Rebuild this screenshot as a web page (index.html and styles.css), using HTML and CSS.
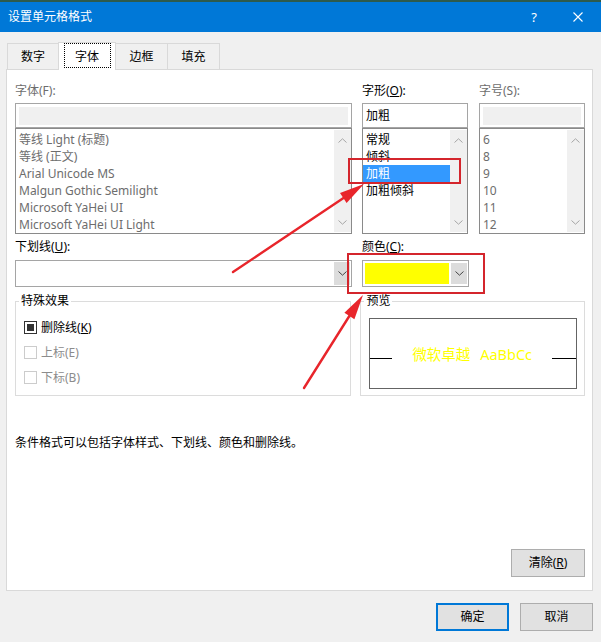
FILE: index.html
```html
<!DOCTYPE html>
<html lang="zh-CN">
<head>
  <meta charset="UTF-8">
  <meta name="viewport" content="width=device-width, initial-scale=1.0">
  <title>设置单元格格式</title>
  <link rel="stylesheet" href="styles.css">
</head>
<body>
  <div class="titlebar">
    <span class="title">设置单元格格式</span>
    <span class="help">?</span>
    <span class="close">
      <svg width="10" height="10" viewBox="0 0 10 10"><path d="M0.5 0.5 L9.5 9.5 M9.5 0.5 L0.5 9.5" stroke="#fff" stroke-width="1.1" fill="none"/></svg>
    </span>
  </div>

  <div class="tabs">
    <div class="tab first">数字</div>
    <div class="tab active"><span class="focus">字体</span></div>
    <div class="tab">边框</div>
    <div class="tab">填充</div>
  </div>

  <div class="panel">
    <div class="row">
      <div class="col col-font">
        <div class="label off">字体(F):</div>
        <div class="input"><div class="fill"></div></div>
        <div class="listbox">
          <ul class="items off">
            <li>等线 Light (标题)</li>
            <li>等线 (正文)</li>
            <li>Arial Unicode MS</li>
            <li>Malgun Gothic Semilight</li>
            <li>Microsoft YaHei UI</li>
            <li>Microsoft YaHei UI Light</li>
          </ul>
          <div class="scroll">
            <svg width="9" height="5" viewBox="0 0 9 5"><path d="M0.5 4.5 L4.5 0.8 L8.5 4.5" stroke="#a6a6a6" fill="none"/></svg>
            <svg width="9" height="5" viewBox="0 0 9 5"><path d="M0.5 0.5 L4.5 4.2 L8.5 0.5" stroke="#a6a6a6" fill="none"/></svg>
          </div>
        </div>
      </div>

      <div class="col col-style">
        <div class="label">字形(<u>O</u>):</div>
        <div class="input"><span class="value">加粗</span></div>
        <div class="listbox">
          <ul class="items">
            <li>常规</li>
            <li>倾斜</li>
            <li class="selected">加粗</li>
            <li>加粗倾斜</li>
          </ul>
          <div class="scroll">
            <svg width="9" height="5" viewBox="0 0 9 5"><path d="M0.5 4.5 L4.5 0.8 L8.5 4.5" stroke="#a6a6a6" fill="none"/></svg>
            <svg width="9" height="5" viewBox="0 0 9 5"><path d="M0.5 0.5 L4.5 4.2 L8.5 0.5" stroke="#a6a6a6" fill="none"/></svg>
          </div>
        </div>
      </div>

      <div class="col col-size">
        <div class="label off">字号(S):</div>
        <div class="input"><div class="fill"></div></div>
        <div class="listbox">
          <ul class="items off">
            <li>6</li>
            <li>8</li>
            <li>9</li>
            <li>10</li>
            <li>11</li>
            <li>12</li>
          </ul>
          <div class="scroll">
            <svg width="9" height="5" viewBox="0 0 9 5"><path d="M0.5 4.5 L4.5 0.8 L8.5 4.5" stroke="#a6a6a6" fill="none"/></svg>
            <svg width="9" height="5" viewBox="0 0 9 5"><path d="M0.5 0.5 L4.5 4.2 L8.5 0.5" stroke="#a6a6a6" fill="none"/></svg>
          </div>
        </div>
      </div>
    </div>

    <div class="row row-combo">
      <div class="col col-font">
        <div class="label label-combo">下划线(<u>U</u>):</div>
        <div class="combo">
          <div class="combo-value"></div>
          <div class="combo-btn">
            <svg width="9" height="5" viewBox="0 0 9 5"><path d="M0.5 0.5 L4.5 4.2 L8.5 0.5" stroke="#444" fill="none"/></svg>
          </div>
        </div>
      </div>
      <div class="col col-style">
        <div class="label label-combo">颜色(<u>C</u>):</div>
        <div class="combo combo-color">
          <div class="swatch"></div>
          <div class="combo-btn">
            <svg width="9" height="5" viewBox="0 0 9 5"><path d="M0.5 0.5 L4.5 4.2 L8.5 0.5" stroke="#444" fill="none"/></svg>
          </div>
        </div>
      </div>
    </div>

    <div class="groups">
      <fieldset class="group group-effects">
        <legend>特殊效果</legend>
        <div class="effects">
          <div class="check-row"><span class="check on"></span>删除线(<u>K</u>)</div>
          <div class="check-row off"><span class="check"></span>上标(E)</div>
          <div class="check-row off"><span class="check"></span>下标(B)</div>
        </div>
      </fieldset>
      <fieldset class="group group-preview">
        <legend>预览</legend>
        <div class="pv-box">
          <span class="pv-line"></span>
          <span class="pv-text">微软卓越 AaBbCc</span>
          <span class="pv-line pv-line-right"></span>
        </div>
      </fieldset>
    </div>

    <p class="note">条件格式可以包括字体样式、下划线、颜色和删除线。</p>

    <div class="panel-foot">
      <button type="button" class="btn btn-clear">清除(<u>R</u>)</button>
    </div>
  </div>

  <div class="footer">
    <button type="button" class="btn btn-ok">确定</button>
    <button type="button" class="btn">取消</button>
  </div>

  <!-- red annotations drawn over the dialog -->
  <svg class="marks" width="601" height="642" viewBox="0 0 601 642">
    <rect x="349" y="159" width="111" height="24" fill="none" stroke="#d4252c" stroke-width="2"/>
    <rect x="348" y="254" width="136" height="39" fill="none" stroke="#d4252c" stroke-width="2"/>
    <line x1="233" y1="272" x2="345" y2="197" stroke="#e8252b" stroke-width="2.4" stroke-linecap="round"/>
    <polygon points="364,184 346.6,202.9 340,192.9" fill="#e8252b"/>
    <line x1="304" y1="388" x2="350" y2="315" stroke="#e8252b" stroke-width="2.4" stroke-linecap="round"/>
    <polygon points="363,295 354.4,319.3 344.4,312.7" fill="#e8252b"/>
  </svg>
</body>
</html>
```

FILE: styles.css
```css
* {
  box-sizing: border-box;
}

body {
  margin: 0;
  width: 601px;
  height: 642px;
  overflow: hidden;
  position: relative;
  background: #f0f0f0;
  font-family: "Noto Sans", "Noto Sans CJK SC", sans-serif;
  font-size: 12px;
  color: #000;
}

/* title bar */
.titlebar {
  height: 32px;
  border-top: 2px solid #2d5a4b;
  background: #0078d7;
  color: #fff;
  display: flex;
  align-items: center;
  padding-left: 8px;
}

.title {
  flex: 1;
  line-height: 16px;
}

.help {
  font-size: 13px;
  margin-right: 36px;
}

.close {
  display: flex;
  margin-right: 18px;
}

/* tabs */
.tabs {
  display: flex;
  align-items: flex-end;
  height: 27px;
  margin-top: 10px;
  padding-left: 7px;
  position: relative;
  z-index: 1;
}

.tab {
  width: 53px;
  height: 26px;
  margin-right: -1px;
  border: 1px solid #d9d9d9;
  border-bottom: none;
  display: flex;
  align-items: center;
  justify-content: center;
  padding-top: 1px;
  line-height: 16px;
}

.tab.first {
  width: 52px;
}

.tab.active {
  width: 58px;
  height: 28px;
  margin-bottom: -1px;
  background: #fff;
  align-items: flex-start;
  padding-top: 0;
}

.focus {
  width: 47px;
  height: 25px;
  border: 1px dotted #000;
  display: flex;
  align-items: center;
  justify-content: center;
  padding-top: 2px;
}

/* main panel */
.panel {
  margin-left: 6px;
  width: 587px;
  height: 522px;
  background: #fff;
  border: 1px solid #d9d9d9;
  padding: 13px 7px 13px 8px;
  display: flex;
  flex-direction: column;
}

.row {
  display: flex;
}

.col-font {
  width: 337px;
  margin-right: 10px;
}

.col-style {
  width: 106px;
  margin-right: 11px;
}

.col-size {
  width: 106px;
}

.label {
  height: 16px;
  line-height: 16px;
  margin-bottom: 4px;
}

.off {
  color: #6d6d6d;
}

.input {
  height: 25px;
  border: 1px solid #a5a5a5;
  padding: 3px 3px 2px;
  display: flex;
  align-items: center;
}

.input .fill {
  width: 100%;
  height: 100%;
  background: #f0f0f0;
}

.input .value {
  line-height: 16px;
}

.listbox {
  height: 106px;
  border: 1px solid #8a8a8a;
  display: flex;
}

.items {
  flex: 1;
  margin: 0;
  padding: 2px 0 0;
  list-style: none;
  overflow: hidden;
}

.items li {
  height: 17px;
  line-height: 17px;
  padding-left: 3px;
  white-space: nowrap;
}

.items li.selected {
  background: #3399ff;
  color: #fff;
}

.scroll {
  width: 17px;
  margin: 1px 0;
  background: #f0f0f0;
  display: flex;
  flex-direction: column;
  justify-content: space-between;
  align-items: center;
  padding: 8px 0 7px;
}

/* underline / colour */
.row-combo {
  margin-top: 5px;
}

.label-combo {
  margin-bottom: 5px;
}

.combo {
  height: 27px;
  border: 1px solid #a5a5a5;
  display: flex;
  padding: 1px;
}

.combo-value {
  flex: 1;
}

.combo-btn {
  width: 16px;
  background: #dcdcdc;
  display: flex;
  align-items: center;
  justify-content: center;
}

.combo-color {
  width: 107px;
  padding: 2px 1px 2px 2px;
}

.swatch {
  flex: 1;
  background: #ffff00;
  margin-right: 2px;
}

/* groups */
.groups {
  display: flex;
  margin-top: 6px;
}

.group {
  margin: 0;
  padding: 0;
  min-width: 0;
  height: 103px;
  border: 1px solid #dcdcdc;
}

.group legend {
  margin-left: 3px;
  padding: 0 2px;
  line-height: 16px;
}

.group-effects {
  width: 337px;
  margin-right: 9px;
}

.group-preview {
  width: 225px;
}

.effects {
  padding: 6px 0 0 8px;
}

.check-row {
  height: 25px;
  display: flex;
  align-items: center;
  line-height: 16px;
}

.check-row.off {
  color: #8c8c8c;
}

.check {
  width: 13px;
  height: 13px;
  margin-right: 4px;
  border: 1px solid #333;
  display: flex;
  align-items: center;
  justify-content: center;
}

.check.on::after {
  content: "";
  width: 7px;
  height: 7px;
  background: #333;
}

.check-row.off .check {
  border-color: #cccccc;
}

.pv-box {
  margin: 9px 7px 0 8px;
  height: 71px;
  border: 1px solid #646464;
  display: flex;
  align-items: center;
  justify-content: space-between;
}

.pv-line {
  width: 22px;
  height: 1px;
  margin-top: 10px;
  background: #000;
}

.pv-line-right {
  width: 24px;
}

.pv-text {
  color: #ffff00;
  font-size: 14.5px;
  line-height: 20px;
  word-spacing: 6px;
}

.note {
  margin: 39px 0 0;
  line-height: 16px;
}

.panel-foot {
  margin-top: auto;
  display: flex;
  justify-content: flex-end;
}

/* buttons */
.btn {
  font: inherit;
  color: #000;
  width: 73px;
  height: 28px;
  padding: 0;
  line-height: 16px;
  background: #e1e1e1;
  border: 1px solid #adadad;
}

.btn-clear {
  width: 74px;
}

.btn-ok {
  border: 2px solid #0078d7;
}

.footer {
  display: flex;
  justify-content: flex-end;
  gap: 11px;
  margin-top: 12px;
  padding-right: 8px;
}

.marks {
  position: absolute;
  left: 0;
  top: 0;
  pointer-events: none;
}
```
